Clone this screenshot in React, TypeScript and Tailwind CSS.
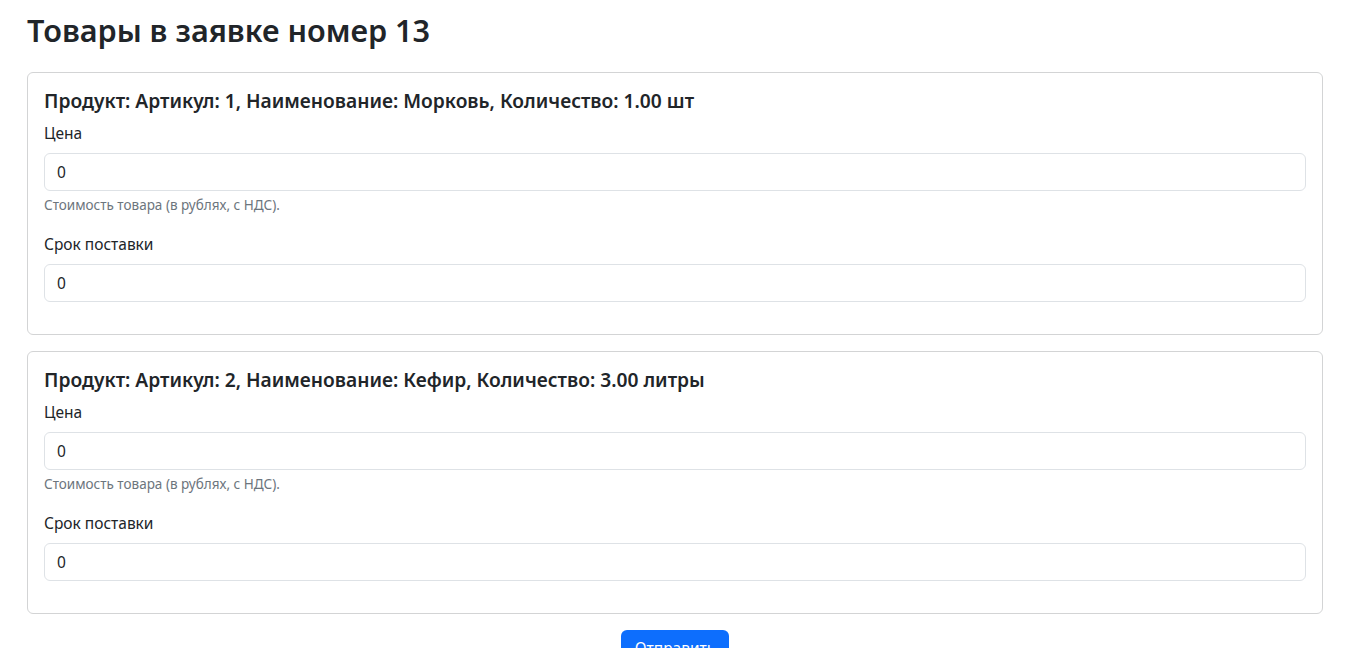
import React from "react";

interface Product {
  article: number;
  name: string;
  quantity: string;
}

const products: Product[] = [
  { article: 1, name: "Морковь", quantity: "1.00 шт" },
  { article: 2, name: "Кефир", quantity: "3.00 литры" },
];

const font = { fontFamily: '"Noto Sans", "Open Sans", sans-serif' };

function ProductCard({ product }: { product: Product }) {
  return (
    <div className="mb-4 rounded-[6px] border border-[#d3d4d5] bg-white p-4">
      <h5 className="mb-2 text-[19.2px] leading-[24px] font-semibold text-[#212529]">
        Продукт: Артикул: {product.article}, Наименование: {product.name}, Количество: {product.quantity}
      </h5>
      <div className="mb-4">
        <label className="mb-2 block text-[15.5px] leading-[24px] text-[#212529]">Цена</label>
        <input
          defaultValue="0"
          className="block h-[38px] w-full rounded-[6px] border border-[#dee2e6] px-3 text-[15.5px] text-[#212529] outline-none"
        />
        <div className="mt-1 text-[13.5px] leading-[21px] text-[#6c757d]">
          Стоимость товара (в рублях, с НДС).
        </div>
      </div>
      <div className="mb-4">
        <label className="mb-2 block text-[15.5px] leading-[24px] text-[#212529]">Срок поставки</label>
        <input
          defaultValue="0"
          className="block h-[38px] w-full rounded-[6px] border border-[#dee2e6] px-3 text-[15.5px] text-[#212529] outline-none"
        />
      </div>
    </div>
  );
}

export default function App() {
  return (
    <div className="min-h-screen bg-white" style={font}>
      <div className="ml-[15px] w-[1320px] px-3">
        <h2 className="pt-[11px] pb-[23px] text-[30.6px] leading-[38px] font-semibold text-[#212529]">
          Товары в заявке номер 13
        </h2>
        {products.map((p) => (
          <ProductCard key={p.article} product={p} />
        ))}
        <div className="flex justify-center">
          <button className="h-[38px] rounded-[6px] bg-[#0d6efd] px-[14px] text-[15.5px] text-white">
            Отправить
          </button>
        </div>
      </div>
    </div>
  );
}
